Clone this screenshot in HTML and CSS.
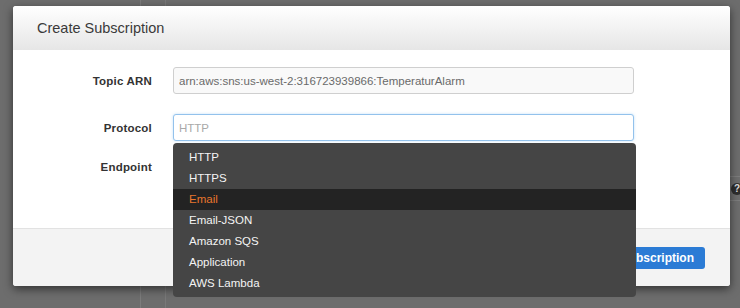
FILE: index.html
```html
<!DOCTYPE html>
<html lang="en">
  <head>
    <meta name="viewport" content="width=device-width, initial-scale=1.0" />
    <link rel="stylesheet" href="styles.css">
  </head>
  <body>
    <div class="page">
      <div class="sidebar"></div>
      <div class="gutter"></div>
      <div class="main">
        <div class="table-row">
          <span class="help">?</span>
        </div>
        <div class="table-row"></div>
      </div>
    </div>

    <div class="modal">
      <div class="modal-header">Create Subscription</div>

      <div class="modal-body">
        <div class="form-row">
          <label for="topic">Topic ARN</label>
          <input
            type="text"
            id="topic"
            class="field field-readonly"
            value="arn:aws:sns:us-west-2:316723939866:TemperaturAlarm"
            readonly
          />
        </div>

        <div class="form-row">
          <label for="protocol">Protocol</label>
          <div class="select-wrap">
            <input type="text" id="protocol" class="field field-focus" placeholder="HTTP" />
            <ul class="dropdown">
              <li>HTTP</li>
              <li>HTTPS</li>
              <li class="active">Email</li>
              <li>Email-JSON</li>
              <li>Amazon SQS</li>
              <li>Application</li>
              <li>AWS Lambda</li>
            </ul>
          </div>
        </div>

        <div class="form-row form-row-tight">
          <label for="endpoint">Endpoint</label>
          <input type="text" id="endpoint" class="field" />
        </div>
      </div>

      <div class="modal-footer">
        <button type="button" class="btn-primary">Create Subscription</button>
      </div>
    </div>
  </body>
</html>
```

FILE: styles.css
```css
body {
  margin: 0;
  width: 740px;
  height: 308px;
  overflow: hidden;
  position: relative;
  background-color: #6d6d6d;
  font-family: "Liberation Sans", Arial, sans-serif;
  color: #333;
}
.page {
  display: flex;
  height: 308px;
}
.sidebar {
  width: 140px;
  border-right: 1px solid #7c7c7c;
}
.gutter {
  width: 24px;
  border-right: 1px solid #797979;
}
.main {
  flex: 1;
  padding-top: 176px;
}
.table-row {
  height: 23px;
  border-top: 1px solid #7d7d7d;
  display: flex;
  justify-content: flex-end;
  align-items: center;
}
.help {
  width: 12px;
  height: 12px;
  margin-right: -3px;
  border-radius: 50%;
  background: #2e2e2e;
  color: #ddd;
  font-size: 10px;
  font-weight: bold;
  line-height: 12px;
  text-align: center;
}
.modal {
  position: absolute;
  left: 13px;
  top: 6px;
  width: 717px;
  height: 280px;
  display: flex;
  flex-direction: column;
  background: white;
  border-radius: 3px;
  box-shadow: 0 3px 10px rgba(0, 0, 0, 0.55);
}
.modal-header {
  height: 44px;
  padding-left: 24px;
  display: flex;
  align-items: center;
  font-size: 14.5px;
  color: #3a3a3a;
  border-radius: 3px 3px 0 0;
  background: linear-gradient(#ffffff, #e6e6e6);
}
.modal-body {
  flex: 1;
  padding-top: 17px;
  display: flex;
  flex-direction: column;
  gap: 20px;
}
.form-row {
  display: grid;
  grid-template-columns: 139px 461px;
  column-gap: 21px;
  align-items: center;
}
.form-row-tight {
  margin-top: -8px;
}
label {
  text-align: right;
  font-size: 11.5px;
  font-weight: bold;
  letter-spacing: 0.2px;
  color: #333;
}
.field {
  width: 100%;
  height: 27px;
  box-sizing: border-box;
  padding: 0 5px;
  border: 1px solid #cfcfcf;
  border-radius: 3px;
  font-family: inherit;
  font-size: 11.5px;
  color: #666;
  background: #fff;
}
.field-readonly {
  background: #f9f9f9;
  color: #6a6a6a;
}
.field-focus {
  border-color: #93c2ec;
  box-shadow: 0 0 3px rgba(82, 168, 236, 0.35);
  outline: none;
}
.field::placeholder {
  color: #a9a9a9;
}
.select-wrap {
  position: relative;
}
.dropdown {
  position: absolute;
  top: calc(100% + 2px);
  left: 0;
  width: 463px;
  margin: 0;
  padding: 4px 0 3px;
  list-style: none;
  background: #454545;
  border-radius: 4px;
  z-index: 2;
}
.dropdown li {
  height: 21px;
  line-height: 21px;
  padding-left: 16px;
  font-size: 11.5px;
  color: #f4f4f4;
}
.dropdown li.active {
  background: #232323;
  color: #e8762d;
}
.modal-footer {
  height: 57px;
  border-top: 1px solid #e2e2e2;
  background: #f3f3f3;
  border-radius: 0 0 3px 3px;
  display: flex;
  justify-content: flex-end;
  align-items: center;
  padding-right: 25px;
}
.btn-primary {
  height: 22px;
  padding: 0 11px;
  border: none;
  border-radius: 3px;
  background-color: #2b7bd5;
  color: white;
  font-family: inherit;
  font-size: 12px;
  font-weight: bold;
}
```
